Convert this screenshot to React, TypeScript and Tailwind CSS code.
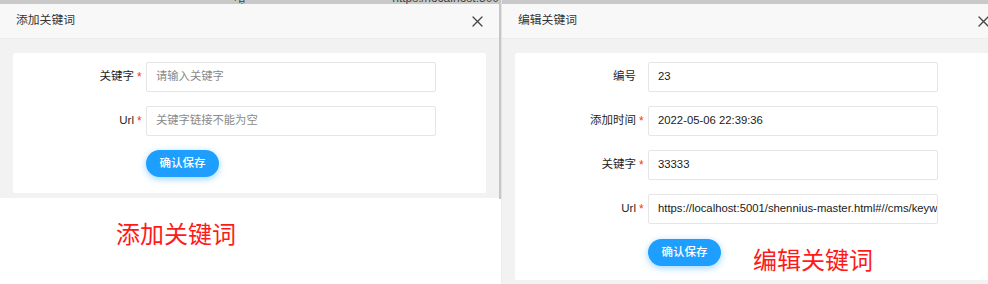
import React from "react";

const FONT = '"Liberation Sans", "Noto Sans CJK SC", Arial, sans-serif';

function CloseIcon() {
  return (
    <svg width="11" height="11" viewBox="0 0 11 11" fill="none">
      <path d="M1 1 L10 10 M10 1 L1 10" stroke="#444" strokeWidth="1.3" strokeLinecap="round" />
    </svg>
  );
}

function Row({
  label,
  required,
  value,
  placeholder,
}: {
  label: string;
  required?: boolean;
  value?: string;
  placeholder?: string;
}) {
  return (
    <div className="flex items-center h-[30px]">
      <div className="w-[121px] text-right text-[11.5px] text-[#1f1f1f] leading-none">{label}</div>
      <div className="w-[12px] pl-[3px] text-[12px] text-[#ff2b2b] leading-none">{required ? "*" : ""}</div>
      <div className="w-[290px] h-[30px] border border-[#e6e6e6] rounded-[2px] bg-white flex items-center pl-[9px] pr-[6px] overflow-hidden whitespace-nowrap text-[11.3px] leading-none">
        {value ? (
          <span className="text-[#1a1a1a]">{value}</span>
        ) : (
          <span className="text-[#8a8a8a]">{placeholder}</span>
        )}
      </div>
    </div>
  );
}

function SaveButton() {
  return (
    <button className="w-[73px] h-[27px] rounded-full bg-[#1e9fff] text-white text-[11.5px] font-medium shadow-[0_2px_7px_rgba(30,159,255,0.45)] flex items-center justify-center">
      确认保存
    </button>
  );
}

function Header({ title }: { title: string }) {
  return (
    <div className="h-[35px] bg-[#f8f8f8] border-b border-[#ececec] flex items-center justify-between pl-[16px] pr-[16px] shrink-0">
      <span className="text-[11.8px] text-[#333]">{title}</span>
      <CloseIcon />
    </div>
  );
}

export default function App() {
  return (
    <div className="w-[988px] h-[284px] flex overflow-hidden bg-white" style={{ fontFamily: FONT }}>
      {/* Left screenshot */}
      <div className="w-[499px] shrink-0 flex flex-col">
        <div className="h-[4px] bg-[#c9c9c9] overflow-hidden relative">
          <div className="flex text-[12px] text-[#444] leading-[12px] mt-[-8px]">
            <span className="ml-[234px]">哈哈</span>
            <span className="ml-[142px]">https://localhost:500</span>
          </div>
        </div>
        <Header title="添加关键词" />
        <div className="bg-[#f2f2f2] pt-[14px] pb-[5px] px-[13px]">
          <div className="bg-white rounded-[2px] h-[140px] pt-[9px] flex flex-col gap-[14px]">
            <Row label="关键字" required placeholder="请输入关键字" />
            <Row label="Url" required placeholder="关键字链接不能为空" />
            <div className="pl-[133px]">
              <SaveButton />
            </div>
          </div>
        </div>
        <div
          className="pt-[23px] pl-[116px] text-[24px] leading-[24px] text-[#ff1a1a]"
          style={{ fontFamily: '"Noto Sans CJK SC", serif' }}
        >
          添加关键词
        </div>
      </div>

      {/* separator */}
      <div className="w-[3px] shrink-0 flex flex-col">
        <div className="h-[199px] flex">
          <div className="w-[2px] bg-[#c6c6c6]" />
          <div className="w-[1px] bg-[#e4e4e4]" />
        </div>
        <div className="flex-1 flex">
          <div className="w-[2px] bg-white" />
          <div className="w-[1px] bg-[#eeeeee]" />
        </div>
      </div>

      {/* Right screenshot */}
      <div className="w-[503px] shrink-0 flex flex-col">
        <div className="h-[4px] bg-[#c9c9c9]" />
        <Header title="编辑关键词" />
        <div className="flex-1 bg-[#f2f2f2] pt-[14px] px-[13px]">
          <div className="bg-white rounded-[2px] h-[227px] pt-[9px] flex flex-col gap-[14px]">
            <Row label="编号" value="23" />
            <Row label="添加时间" required value="2022-05-06 22:39:36" />
            <Row label="关键字" required value="33333" />
            <Row label="Url" required value="https://localhost:5001/shennius-master.html#//cms/keywords" />
            <div className="pl-[133px] flex items-start">
              <div className="mt-[1px]">
                <SaveButton />
              </div>
              <div
                className="ml-[32px] mt-[9px] text-[24px] leading-[24px] text-[#ff1a1a]"
                style={{ fontFamily: '"Noto Sans CJK SC", serif' }}
              >
                编辑关键词
              </div>
            </div>
          </div>
        </div>
      </div>
    </div>
  );
}
